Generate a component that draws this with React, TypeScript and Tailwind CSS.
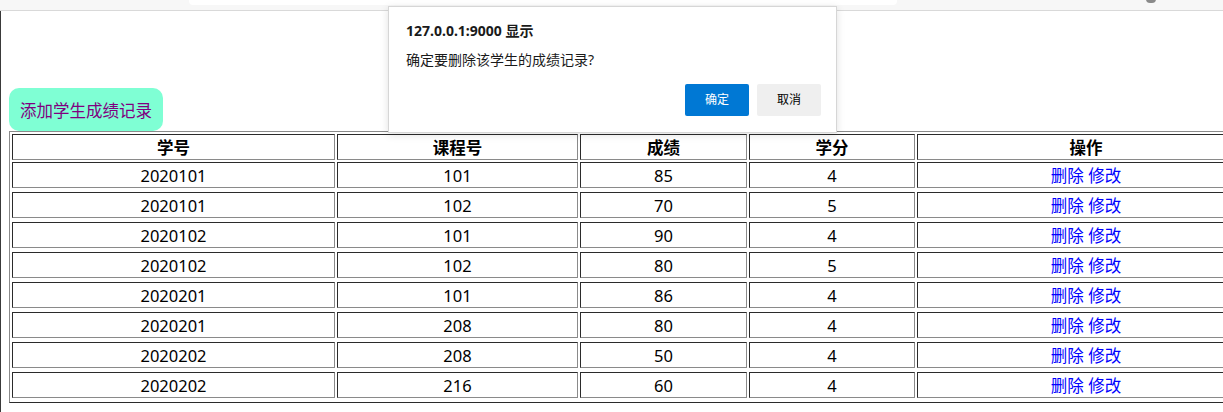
import React from "react"

const rows = [
  ["2020101", "101", "85", "4"],
  ["2020101", "102", "70", "5"],
  ["2020102", "101", "90", "4"],
  ["2020102", "102", "80", "5"],
  ["2020201", "101", "86", "4"],
  ["2020201", "208", "80", "4"],
  ["2020202", "208", "50", "4"],
  ["2020202", "216", "60", "4"],
]

const font = { fontFamily: '"Noto Sans", "Noto Sans CJK SC", sans-serif' }

const cell =
  "h-[26px] px-0 pt-[3px] pb-[1px] text-center align-middle leading-[20px] border border-t-[#2b2b2b] border-l-[#2b2b2b] border-b-[#8a8a8a] border-r-[#8a8a8a]"

export default function App() {
  return (
    <div className="relative w-[1223px] h-[412px] overflow-hidden bg-white text-black" style={font}>
      {/* browser chrome strip */}
      <div className="relative h-[11px] bg-[#f7f7f7] border-b border-[#d9d9d9]">
        <div className="absolute left-[189px] top-0 w-[708px] h-[5px] bg-white rounded-b-[4px]" />
        <div className="absolute left-[1146px] -top-[5px] w-[10px] h-[8px] rounded-full bg-[#8a8a8a]" />
      </div>

      {/* page */}
      <div className="h-[401px] border-l border-[#3a3a3a] pl-[8px] pt-[77px] flex flex-col items-start">
        <button className="h-[43px] w-[154px] pt-[3px] rounded-[10px] bg-[#7fffd4] text-[#800080] text-[16.5px] leading-none">
          添加学生成绩记录
        </button>

        <table className="table-fixed w-[1249px] border-separate border-spacing-[2px] border border-t-[#8a8a8a] border-l-[#8a8a8a] border-b-[#2b2b2b] border-r-[#2b2b2b] text-[16.5px]">
          <thead>
            <tr>
              <th className={`${cell} w-[323px] font-bold`}>学号</th>
              <th className={`${cell} w-[241px] font-bold`}>课程号</th>
              <th className={`${cell} w-[167px] font-bold`}>成绩</th>
              <th className={`${cell} w-[166px] font-bold`}>学分</th>
              <th className={`${cell} w-[338px] font-bold`}>操作</th>
            </tr>
          </thead>
          <tbody>
            {rows.map((r, i) => (
              <React.Fragment key={i}>
                <tr>
                  {r.map((v, j) => (
                    <td key={j} className={cell}>
                      {v}
                    </td>
                  ))}
                  <td className={cell}>
                    <a className="text-[#0000ff]">删除</a> <a className="text-[#0000ff]">修改</a>
                  </td>
                </tr>
                <tr className="h-0">
                  <td colSpan={5} className="h-0 p-0 border-0 text-[0px] leading-[0px]" />
                </tr>
              </React.Fragment>
            ))}
          </tbody>
        </table>
      </div>

      {/* alert dialog */}
      <div className="absolute left-[388px] top-[6px] w-[449px] h-[127px] bg-white border border-[#d6d6d6] shadow-[0_2px_8px_rgba(0,0,0,0.12)] pl-[17px] pr-[15px] pt-[14px]">
        <div className="text-[14px] font-bold leading-[20px] text-[#1a1a1a]">127.0.0.1:9000 显示</div>
        <div className="mt-[9px] text-[14px] leading-[20px] text-[#1a1a1a]">确定要删除该学生的成绩记录?</div>
        <div className="mt-[14px] flex justify-end gap-[8px]">
          <button className="w-[64px] h-[32px] rounded-[2px] bg-[#0078d4] text-white text-[12px]">确定</button>
          <button className="w-[64px] h-[32px] rounded-[2px] bg-[#efefef] text-black text-[12px]">取消</button>
        </div>
      </div>
    </div>
  )
}
